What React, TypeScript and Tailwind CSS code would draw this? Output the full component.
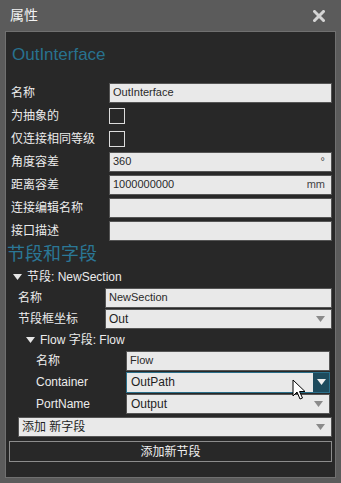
const FONT = "font-['Liberation_Sans','Noto_Sans_CJK_SC',sans-serif]"

function Caret({ color = '#8a8a8a' }: { color?: string }) {
  return (
    <svg width="9" height="6" viewBox="0 0 9 6">
      <path d="M0 0 H9 L4.5 6 Z" fill={color} />
    </svg>
  )
}

function TextBox({ value = '', unit, className = '' }: { value?: string; unit?: string; className?: string }) {
  return (
    <div
      className={`flex h-[20px] items-center justify-between border border-[#555] bg-[#e9e9e9] pl-[3px] pr-[6px] text-[11px] text-[#2a2a2a] ${className}`}
    >
      <span>{value}</span>
      {unit && <span className="text-[11px] text-[#444]">{unit}</span>}
    </div>
  )
}

function Select({ value, className = '' }: { value: string; className?: string }) {
  return (
    <div
      className={`flex h-[20px] items-center justify-between border border-[#555] bg-[#e9e9e9] pl-[3px] pr-[6px] text-[12px] text-[#1f1f1f] ${className}`}
    >
      <span>{value}</span>
      <Caret />
    </div>
  )
}

function Checkbox() {
  return <div className="h-[16px] w-[16px] border border-[#dcdcdc]" />
}

function Row({ label, children, h, labelW, pl }: { label: string; children: React.ReactNode; h: string; labelW: string; pl: string }) {
  return (
    <div className={`flex items-center ${h} ${pl}`}>
      <div className={`${labelW} shrink-0 text-[12px] text-[#ececec]`}>{label}</div>
      <div className="flex-1">{children}</div>
    </div>
  )
}

function Cursor() {
  return (
    <svg className="absolute left-[292px] top-[379px]" width="14" height="22" viewBox="0 0 14 22">
      <path d="M1 1 V17 L5 13 L8 20 L10.5 19 L7.5 12.5 H13 Z" fill="#fff" stroke="#000" strokeWidth="1" strokeLinejoin="round" />
    </svg>
  )
}

export default function App() {
  return (
    <div className={`relative h-[483px] w-[341px] overflow-hidden bg-[#5b5b5b] ${FONT}`}>
      <div className="flex h-[31px] items-center justify-between pl-[10px] pr-[16px]">
        <span className="text-[14px] text-[#f2f2f2]">属性</span>
        <svg width="12" height="12" viewBox="0 0 12 12">
          <path d="M1.5 1.5 L10.5 10.5 M10.5 1.5 L1.5 10.5" stroke="#d4d4d4" strokeWidth="3" strokeLinecap="square" />
        </svg>
      </div>

      <div className="mx-[5px] h-[447px] border border-[#707070] bg-[#282828]">
        <div className="h-[49px] pl-[6px] pt-[12px]">
          <div className="text-[17px] leading-[22px] text-[#28728f]">OutInterface</div>
        </div>

        <div className="pr-[3px]">
          <Row label="名称" h="h-[23px]" labelW="w-[98px]" pl="pl-[5px]">
            <TextBox value="OutInterface" />
          </Row>
          <Row label="为抽象的" h="h-[23px]" labelW="w-[98px]" pl="pl-[5px]">
            <Checkbox />
          </Row>
          <Row label="仅连接相同等级" h="h-[23px]" labelW="w-[98px]" pl="pl-[5px]">
            <Checkbox />
          </Row>
          <Row label="角度容差" h="h-[23px]" labelW="w-[98px]" pl="pl-[5px]">
            <TextBox value="360" unit="°" />
          </Row>
          <Row label="距离容差" h="h-[23px]" labelW="w-[98px]" pl="pl-[5px]">
            <TextBox value="1000000000" unit="mm" />
          </Row>
          <Row label="连接编辑名称" h="h-[23px]" labelW="w-[98px]" pl="pl-[5px]">
            <TextBox />
          </Row>
          <Row label="接口描述" h="h-[23px]" labelW="w-[98px]" pl="pl-[5px]">
            <TextBox />
          </Row>
        </div>

        <div className="h-[24px] pl-[1px] text-[18px] leading-[24px] text-[#2b7796]">节段和字段</div>

        <div className="flex h-[21px] items-center gap-[5px] pl-[7px] text-[12px] text-[#ececec]">
          <Caret color="#e6e6e6" />
          <span>节段: NewSection</span>
        </div>

        <div className="pr-[3px]">
          <Row label="名称" h="h-[21px]" labelW="w-[87px]" pl="pl-[12px]">
            <TextBox value="NewSection" />
          </Row>
          <Row label="节段框坐标" h="h-[21px]" labelW="w-[87px]" pl="pl-[12px]">
            <Select value="Out" />
          </Row>
        </div>

        <div className="flex h-[21px] items-center gap-[5px] pl-[20px] text-[12px] text-[#ececec]">
          <Caret color="#e6e6e6" />
          <span>Flow 字段: Flow</span>
        </div>

        <div className="pr-[5px]">
          <Row label="名称" h="h-[21px]" labelW="w-[90px]" pl="pl-[30px]">
            <TextBox value="Flow" />
          </Row>
          <Row label="Container" h="h-[22px]" labelW="w-[90px]" pl="pl-[30px]">
            <div className="flex h-[21px] items-center justify-between border border-[#2a6f8a] bg-[#e9e9e9] pl-[4px] text-[12px] text-[#1f1f1f]">
              <span>OutPath</span>
              <div className="flex h-full w-[16px] items-center justify-center bg-[#1e4b5d]">
                <Caret color="#f0f0f0" />
              </div>
            </div>
          </Row>
          <Row label="PortName" h="h-[22px]" labelW="w-[90px]" pl="pl-[30px]">
            <Select value="Output" className="pl-[4px]" />
          </Row>
        </div>

        <div className="flex h-[22px] items-end pl-[12px] pr-[3px]">
          <Select value="添加 新字段" className="w-full" />
        </div>

        <div className="mx-[3px] mt-[4px] flex h-[21px] items-center justify-center border border-[#8c8c8c] text-[12px] text-[#f0f0f0]">
          添加新节段
        </div>
      </div>

      <Cursor />
    </div>
  )
}
